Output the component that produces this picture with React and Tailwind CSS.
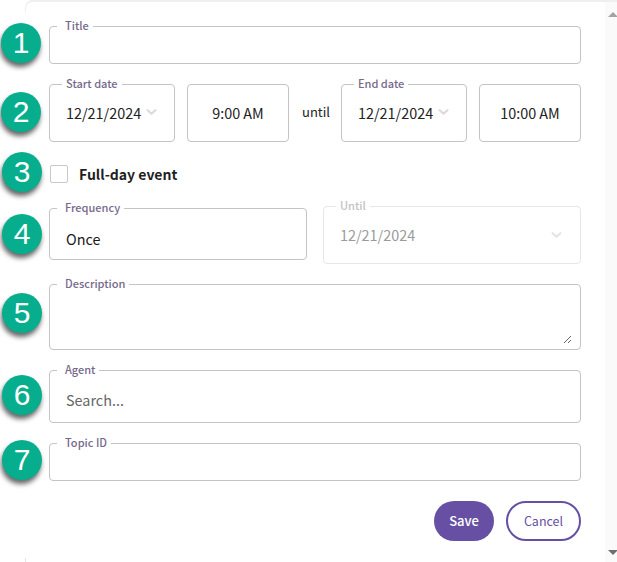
const FONT = "font-['Noto_Sans_CJK_JP','Noto_Sans',sans-serif]";

function Chevron({ className }) {
  return (
    <svg viewBox="0 0 12 7" className={className} fill="none" stroke="currentColor" strokeWidth="2.6" strokeLinecap="round" strokeLinejoin="round">
      <path d="M1.5 1.5 6 5.5l4.5-4" />
    </svg>
  );
}

function Field({ label, className = "", legendClass = "ml-[7px] pl-2 pr-1", disabled = false, children }) {
  return (
    <fieldset className={`min-w-0 rounded border ${disabled ? "border-[#e6e6e6]" : "border-[#c4c4c4]"} ${className}`}>
      {label && (
        <legend className={`h-0 -translate-y-[2px] text-[11px] leading-[0] font-medium ${disabled ? "text-[#c2c2c2]" : "text-[#76698c]"} ${legendClass}`}>
          {label}
        </legend>
      )}
      {children}
    </fieldset>
  );
}

function DateField({ label }) {
  return (
    <Field label={label} legendClass="ml-3 px-1" className="w-[126px] h-[58px] flex items-center">
      <div className="flex h-full w-full items-center pl-4 text-[14.4px] text-[#222222]">
        <span>12/21/2024</span>
        <Chevron className="ml-[5px] mb-[2px] w-[11px] h-[6px] text-[#dcd9e0]" />
      </div>
    </Field>
  );
}

function TimeField({ value }) {
  return (
    <div className="flex w-[102px] h-[58px] items-center justify-center rounded border border-[#c4c4c4] text-[14.4px] text-[#222222]">
      {value}
    </div>
  );
}

function Badge({ n, className = "" }) {
  return (
    <div className={`absolute flex h-10 w-10 items-center justify-center rounded-full bg-[#07ae8e] shadow-[-1px_4px_5px_rgba(0,0,0,0.6)] font-['Liberation_Sans',sans-serif] text-[30px] leading-none text-white ${className}`}>
      {n}
    </div>
  );
}

export default function App() {
  return (
    <div className={`relative flex h-[562px] w-[617px] flex-col overflow-hidden bg-white ${FONT}`}>
      <div className="ml-[30px] h-[2px] shrink-0 bg-[#efefef]" />
      <div className="absolute left-[25px] top-0 h-3 w-2 rounded-tl-lg border-l border-t-2 border-[#efefef]" />
      <div className="absolute bottom-0 left-[25px] h-1 w-px bg-[#e4e4e4]" />
      <div className="flex min-h-0 flex-1">
        <main className="flex flex-1 flex-col pl-[49px] pr-6 pt-6">
          <div className="relative">
            <Badge n="1" className="-left-[48px] -top-[3px]" />
            <Field label="Title" className="h-[38px]" />
          </div>
          <div className="relative mt-5 flex items-center">
            <Badge n="2" className="-left-[48px] top-[8px]" />
            <DateField label="Start date" />
            <div className="ml-3"><TimeField value="9:00 AM" /></div>
            <span className="mx-[13px] mb-[2px] w-[26px] text-[13px] text-[#222222]">until</span>
            <DateField label="End date" />
            <div className="ml-3"><TimeField value="10:00 AM" /></div>
          </div>
          <div className="relative mt-[23px] flex h-[18px] items-center">
            <Badge n="3" className="-left-[47px] -top-[13px]" />
            <div className="ml-px h-[18px] w-[18px] rounded-[2px] border border-[#c8c8c8]" />
            <span className="ml-[11px] text-[14px] font-semibold text-[#1f1f1f]">Full-day event</span>
          </div>
          <div className="relative mt-[23px] flex items-start gap-4">
            <Badge n="4" className="-left-[47px] top-[8px]" />
            <Field label="Frequency" className="mt-[2px] h-[52px] w-[258px]">
              <div className="flex h-full items-center pl-4 pt-[10px] text-[14.4px] text-[#1a1a1a]">Once</div>
            </Field>
            <Field label="Until" disabled legendClass="ml-3 px-1" className="h-[58px] w-[258px]">
              <div className="flex h-full items-center justify-between pl-4 pr-[18px] text-[14.4px] text-[#9a9a9a]">
                <span>12/21/2024</span>
                <Chevron className="w-[11px] h-[6px] text-[#e4e4e4]" />
              </div>
            </Field>
          </div>
          <div className="relative mt-5">
            <Badge n="5" className="-left-[47px] top-[9px]" />
            <Field label="Description" className="h-[66px]">
              <textarea className="block h-[59px] w-[522px] resize-y bg-transparent outline-none" aria-label="Description" />
            </Field>
          </div>
          <div className="relative mt-5">
            <Badge n="6" className="-left-[47px] top-[5px]" />
            <Field label="Agent" className="h-[53px]">
              <div className="flex h-full items-center pl-4 pt-[7px] text-[14.4px] text-[#666666]">Search...</div>
            </Field>
          </div>
          <div className="relative mt-5">
            <Badge n="7" className="-left-[47px] -top-[3px]" />
            <Field label="Topic ID" className="h-[38px]" />
          </div>
          <div className="mt-5 flex justify-end gap-3">
            <button className="h-10 w-[60px] rounded-full bg-[#6750a4] text-[13px] font-medium text-white">Save</button>
            <button className="h-10 w-[75px] rounded-full border-2 border-[#6750a4] bg-white text-[12.5px] text-[#6750a4]">Cancel</button>
          </div>
        </main>
        <aside className="flex w-3 shrink-0 flex-col items-center justify-between bg-[#fafafa] pb-[7px] pl-[3px] pt-[10px]">
          <div className="h-0 w-0 border-x-[5px] border-b-[5px] border-x-transparent border-b-[#a3a3a3]" />
          <div className="h-0 w-0 border-x-[5px] border-t-[5px] border-x-transparent border-t-[#6e6e6e]" />
        </aside>
      </div>
    </div>
  );
}
